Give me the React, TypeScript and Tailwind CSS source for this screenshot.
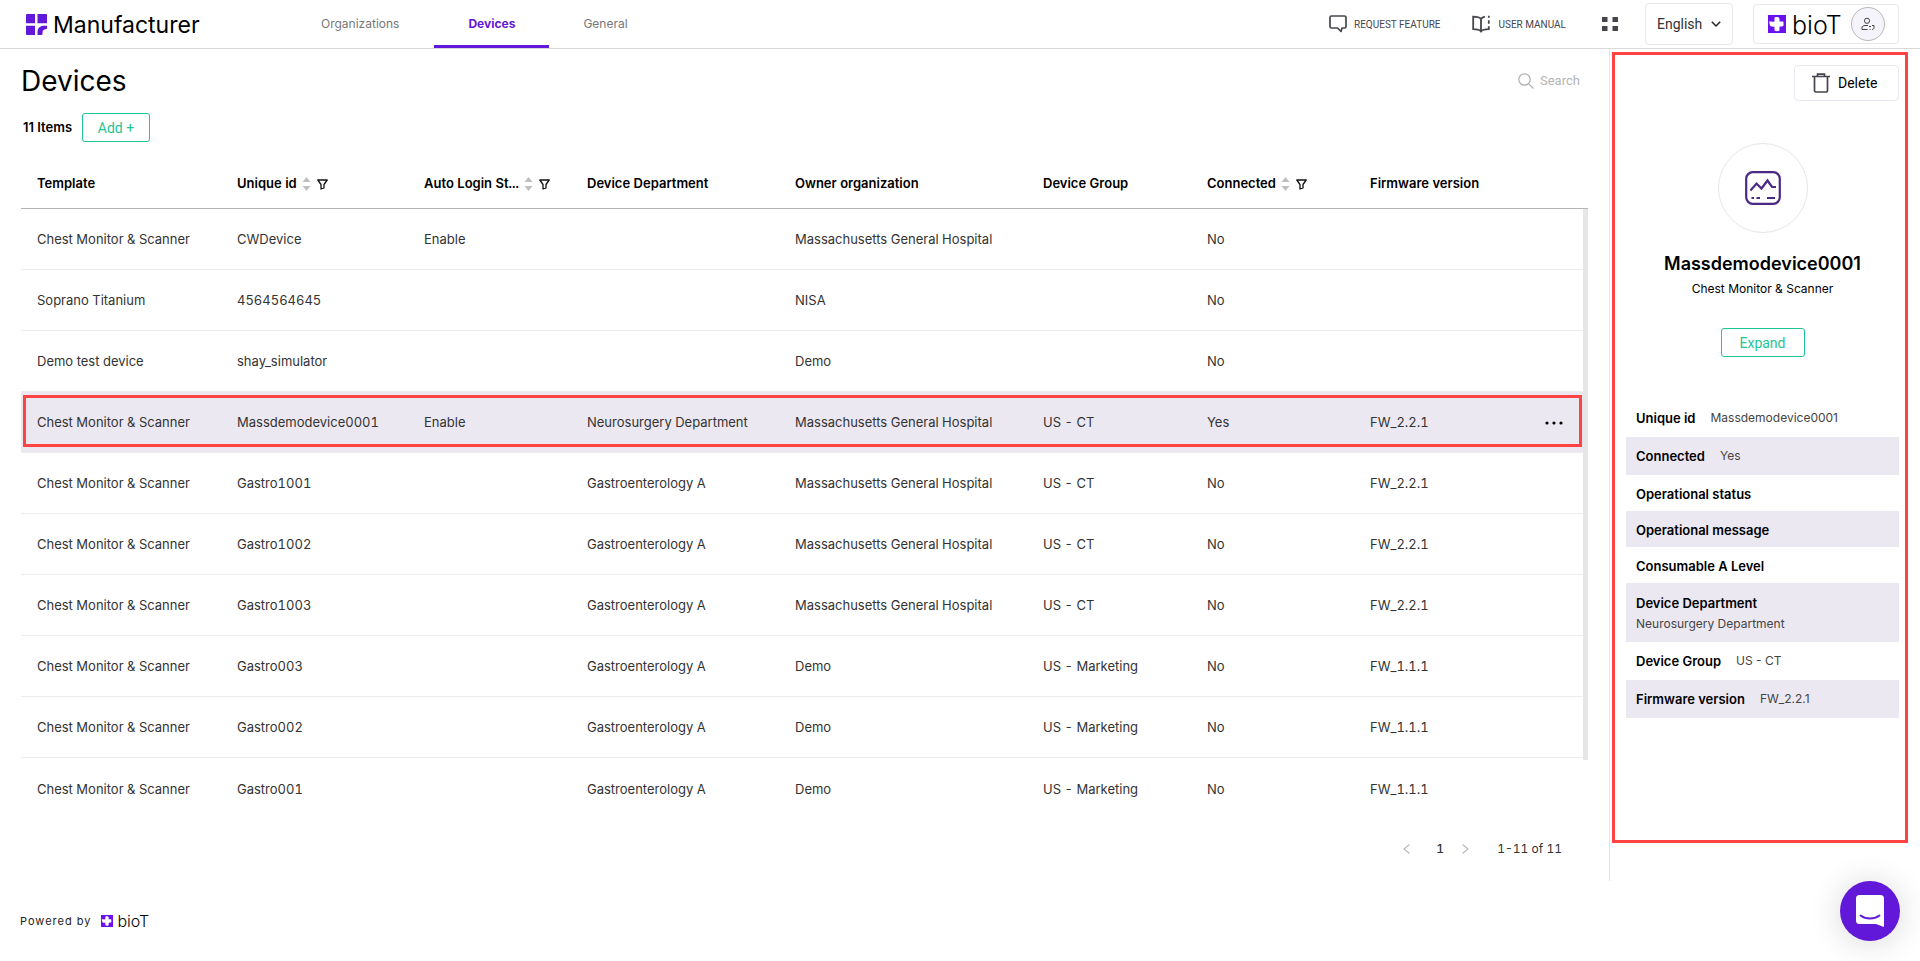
import React from "react";

type Device = {
  template: string;
  id: string;
  login?: string;
  department?: string;
  owner: string;
  group?: string;
  connected: string;
  firmware?: string;
};

const MGH = "Massachusetts General Hospital";

const devices: Device[] = [
  { template: "Chest Monitor & Scanner", id: "CWDevice", login: "Enable", owner: MGH, connected: "No" },
  { template: "Soprano Titanium", id: "4564564645", owner: "NISA", connected: "No" },
  { template: "Demo test device", id: "shay_simulator", owner: "Demo", connected: "No" },
  { template: "Chest Monitor & Scanner", id: "Massdemodevice0001", login: "Enable", department: "Neurosurgery Department", owner: MGH, group: "US - CT", connected: "Yes", firmware: "FW_2.2.1" },
  { template: "Chest Monitor & Scanner", id: "Gastro1001", department: "Gastroenterology A", owner: MGH, group: "US - CT", connected: "No", firmware: "FW_2.2.1" },
  { template: "Chest Monitor & Scanner", id: "Gastro1002", department: "Gastroenterology A", owner: MGH, group: "US - CT", connected: "No", firmware: "FW_2.2.1" },
  { template: "Chest Monitor & Scanner", id: "Gastro1003", department: "Gastroenterology A", owner: MGH, group: "US - CT", connected: "No", firmware: "FW_2.2.1" },
  { template: "Chest Monitor & Scanner", id: "Gastro003", department: "Gastroenterology A", owner: "Demo", group: "US - Marketing", connected: "No", firmware: "FW_1.1.1" },
  { template: "Chest Monitor & Scanner", id: "Gastro002", department: "Gastroenterology A", owner: "Demo", group: "US - Marketing", connected: "No", firmware: "FW_1.1.1" },
  { template: "Chest Monitor & Scanner", id: "Gastro001", department: "Gastroenterology A", owner: "Demo", group: "US - Marketing", connected: "No", firmware: "FW_1.1.1" },
];

const columns = [
  { label: "Template", width: "w-[200px]" },
  { label: "Unique id", width: "w-[187px]", filter: true },
  { label: "Auto Login St...", width: "w-[163px]", filter: true },
  { label: "Device Department", width: "w-[208px]" },
  { label: "Owner organization", width: "w-[248px]" },
  { label: "Device Group", width: "w-[164px]" },
  { label: "Connected", width: "w-[163px]", filter: true },
  { label: "Firmware version", width: "" },
];

const details = [
  { label: "Unique id", value: "Massdemodevice0001" },
  { label: "Connected", value: "Yes" },
  { label: "Operational status" },
  { label: "Operational message" },
  { label: "Consumable A Level" },
  { label: "Device Department", value: "Neurosurgery Department", stacked: true },
  { label: "Device Group", value: "US - CT" },
  { label: "Firmware version", value: "FW_2.2.1" },
];

function BiotMark({ className }: { className: string }) {
  return (
    <svg viewBox="0 0 18 18" className={className} aria-hidden="true">
      <path fill="#6a11f0" d="M0 0h18v18H0z" />
      <path fill="#fff" d="M6.500 2.500c2-1 5-.5 5 1.500v2.500c1.500 0 4-.5 4 .5v3.500c0 1-2.500 1-4 1V15c0 1.500-3 1.500-5 .5v-3.700C5 11.500 2.500 12 2 10.500L1 6.500c2 0 4 .5 5.500 0z" />
    </svg>
  );
}

function SortFilter() {
  return (
    <>
      <button type="button" aria-label="Sort" className="ml-[5px]">
        <svg width="9" height="14" viewBox="0 0 9 14" fill="#bfbfbf">
          <path d="M4.500 0 8.500 5H.5zM4.500 14l4-5H.5z" />
        </svg>
      </button>
      <button type="button" aria-label="Filter" className="ml-1.5">
        <svg width="11" height="11" viewBox="0 0 11 11" fill="none" stroke="#111" strokeWidth="1.300" strokeLinejoin="round">
          <path d="M.8 1h9.400L7 5.500V9L4 10V5.500z" />
        </svg>
      </button>
    </>
  );
}

function TopBar() {
  return (
    <header className="flex h-[49px] items-center justify-between border-b border-[#d9d9d9] pl-[26px] pr-[21px]">
      <div className="flex h-full items-center">
        <div className="flex w-[260px] items-center gap-1.5">
          <svg width="21" height="21" viewBox="0 0 21 21" fill="#6218d8" aria-hidden="true">
            <path d="M0 1a1 1 0 0 1 1-1h8v9.300H0zM11.500 0H20a1 1 0 0 1 1 1v8.300h-9.500zM0 11.700h9V21H1a1 1 0 0 1-1-1zM11.500 18c0-4 2.500-6.300 6.500-6.300h3V15c-3 0-4.500 1.500-4.500 3.500V20a1 1 0 0 1-1 1h-4z" />
          </svg>
          <span className="pt-0.5 text-[23px] leading-7 text-black">Manufacturer</span>
        </div>
        <nav className="flex h-full text-xs">
          <a href="#organizations" className="flex items-center px-[35px] text-[#777]">Organizations</a>
          <a href="#devices" className="flex items-center border-b-[3px] border-[#6218d8] px-[34px] pt-[3px] font-bold text-[#6218d8]">Devices</a>
          <a href="#general" className="flex items-center px-[34px] text-[#777]">General</a>
        </nav>
      </div>
      <div className="flex items-center font-['Roboto',sans-serif]">
        <a href="#request" className="flex items-center gap-[7px] text-[10px] text-[#45454d]">
          <svg width="18" height="18" viewBox="0 0 18 18" fill="none" stroke="#45454d" strokeWidth="1.700" strokeLinejoin="round">
            <path d="M2.500 1h13A1.500 1.500 0 0 1 17 2.500v9a1.500 1.500 0 0 1-1.500 1.500H13l-1 3.500L8.500 13h-6A1.500 1.500 0 0 1 1 11.500v-9A1.500 1.500 0 0 1 2.500 1z" />
          </svg>
          REQUEST FEATURE
        </a>
        <a href="#manual" className="ml-8 flex items-center gap-2 text-[10px] text-[#45454d]">
          <svg width="18" height="18" viewBox="0 0 18 18" fill="none" stroke="#45454d" strokeWidth="1.800">
            <path d="M9 4C7.500 2 5 1.700 1.200 1.700v12.500C5 14.200 7.500 14.500 9 16.500c1.500-2 4-2.300 7.800-2.300v-3M9 4v12M9 4c.8-1.300 2-2 4-2.300M16.800 .8v2M16.800 5.200v3.500" />
          </svg>
          USER MANUAL
        </a>
        <button type="button" aria-label="Apps" className="ml-9">
          <svg width="16" height="16" viewBox="0 0 16 16" fill="#45454d">
            <path d="M0 1h5.500v5H0zM10.500 1H16v5h-5.500zM0 10h5.500v5H0zM10.500 10H16v5h-5.500z" />
          </svg>
        </button>
        <div className="relative ml-[27px]">
          <select aria-label="Language" className="h-[42px] w-[88px] appearance-none rounded border border-[#e8e8ec] bg-white pl-[11px] text-sm text-[#333]">
            <option>English</option>
          </select>
          <svg className="pointer-events-none absolute right-3 top-4 h-2.5 w-2.5" viewBox="0 0 10 10" fill="none" stroke="#222" strokeWidth="1.500">
            <path d="m.8 2.800 4.200 4.200 4.200-4.200" />
          </svg>
        </div>
        <button type="button" className="ml-5 flex h-10 w-[146px] items-center rounded border border-[#e8e8ec] pl-3.5 font-['Inter',sans-serif]">
          <BiotMark className="h-[18px] w-[18px]" />
          <span className="ml-1.5 w-[59px] pt-0.5 text-left text-[25px] font-light leading-7 text-black">bioT</span>
          <span className="flex size-[34px] items-center justify-center rounded-full border border-[#b8b8bd] bg-[#f5f4fa]">
            <svg width="14" height="14" viewBox="0 0 14 14" fill="none" stroke="#444" strokeWidth="1">
              <circle cx="6" cy="3.800" r="2.600" />
              <path d="M6.500 12.500H1V11c0-2 1.500-2.500 3-2.500h3M8 9.500h2M8.500 12.500h1M11 8.500h2v2.200c0 1-.8 1.800-2 1.800" />
            </svg>
          </span>
        </button>
      </div>
    </header>
  );
}

function DeviceTable() {
  return (
    <div className="mt-3.5 flex">
      <table className="min-w-0 flex-1 table-fixed border-separate border-spacing-0 text-left text-[13px] tabular-nums">
        <thead>
          <tr>
            {columns.map((c) => (
              <th key={c.label} className={`${c.width} h-[53px] whitespace-nowrap border-b border-[#b5b5b5] pl-4 pt-1 font-semibold text-black`}>
                <div className="flex items-center">
                  {c.label}
                  {c.filter && <SortFilter />}
                </div>
              </th>
            ))}
            <th className="w-[54px] border-b border-[#b5b5b5]" aria-label="Actions" />
          </tr>
        </thead>
        <tbody className="text-[#333] *:*:h-[61px] *:*:border-b *:*:border-[#ededed] *:*:pl-4 *:*:pt-0.5 *:last:*:border-b-0">
          {devices.map((d) => {
            const selected = d.id === "Massdemodevice0001";
            return (
              <tr key={d.id} className={selected ? "relative bg-[#ece8f2]" : ""}>
                <td>{d.template}</td>
                <td>{d.id}</td>
                <td>{d.login}</td>
                <td>{d.department}</td>
                <td>{d.owner}</td>
                <td>{d.group}</td>
                <td>{d.connected}</td>
                <td>{d.firmware}</td>
                <td>
                  {selected && (
                    <>
                      <button type="button" aria-label="More" className="block">
                        <svg width="18" height="4" viewBox="0 0 18 4">
                          <circle cx="2" cy="2" r="1.600" />
                          <circle cx="9" cy="2" r="1.600" />
                          <circle cx="16" cy="2" r="1.600" />
                        </svg>
                      </button>
                      <div className="pointer-events-none absolute bottom-1.5 left-0.5 right-px top-[3px] border-[3px] border-[#ff4242]" />
                    </>
                  )}
                </td>
              </tr>
            );
          })}
        </tbody>
      </table>
      {/* scroll track, the header rule runs on above it */}
      <div className="flex w-[5px] flex-col pb-[59px]">
        <div className="h-[53px] border-b border-[#b5b5b5]" />
        <div className="flex-1 bg-[#e6e6e6]" />
      </div>
    </div>
  );
}

function DevicePanel() {
  return (
    <aside className="w-[311px] shrink-0 border-l border-[#e3e3e3] pb-[38px] pl-0.5 pr-3 pt-[3px]">
      <div className="flex h-full flex-col border-[3px] border-[#ff4242] pl-[11px] pr-1.5 pt-2.5">
        <button type="button" className="flex h-9 w-[105px] items-center gap-2 self-end rounded border border-[#e9e7f2] pl-[17px] font-['Roboto',sans-serif] text-sm text-black">
          <svg width="18" height="20" viewBox="0 0 18 20" fill="none" stroke="#45454d" strokeWidth="1.700">
            <path d="M0 3.500h18M5.500 3V1.200h7V3M2.500 3.500v14a1.500 1.500 0 0 0 1.500 1.500h10a1.500 1.500 0 0 0 1.500-1.500v-14" />
          </svg>
          Delete
        </button>
        <div className="flex flex-col items-center pt-[42px]">
          <div className="flex size-[90px] items-center justify-center rounded-full border border-[#e6e6e6]">
            <svg width="36" height="34" viewBox="0 0 36 34" fill="none" stroke="#4b2a85" strokeWidth="2.200">
              <rect x="1.200" y="1.200" width="33.600" height="31.600" rx="6.500" />
              <path d="m5.500 19.500 6-7 5 5 6-8 4.500 6.500h4M6.500 27H9M11.500 27H15M22 27h8" />
            </svg>
          </div>
          <h2 className="mt-[19px] text-lg font-semibold leading-6 text-black">Massdemodevice0001</h2>
          <p className="mt-[5px] text-xs text-black">Chest Monitor &amp; Scanner</p>
          <button type="button" className="mt-[31px] h-[29px] w-[84px] rounded-[3px] border border-[#1fc493] font-['Roboto',sans-serif] text-sm text-[#1fc493]">Expand</button>
        </div>
        <dl className="mt-[42px]">
          {details.map((d) => (
            <div
              key={d.label}
              className={
                d.stacked
                  ? "flex h-[59px] flex-col justify-center gap-1 px-2.5 even:bg-[#ece8f2]"
                  : d.value
                    ? "flex h-[38px] items-center gap-[15px] px-2.5 even:bg-[#ece8f2]"
                    : "flex h-9 items-center px-2.5 pt-0.5 even:bg-[#ece8f2]"
              }
            >
              <dt className="text-[13px] font-semibold leading-[18px] text-black">{d.label}</dt>
              {d.value && <dd className="text-xs text-[#444]">{d.value}</dd>}
            </div>
          ))}
        </dl>
      </div>
    </aside>
  );
}

export default function App() {
  return (
    <div className="min-h-screen bg-white font-['Inter',sans-serif]">
      <TopBar />
      <div className="flex min-h-[832px]">
        <main className="min-w-0 flex-1 px-[21px] pt-4">
          <div className="flex items-center justify-between">
            <h1 className="text-[28px] leading-8 text-black">Devices</h1>
            <label className="flex items-center gap-1.5">
              <svg width="16" height="16" viewBox="0 0 16 16" fill="none" stroke="#b0b0b0" strokeWidth="1.200">
                <circle cx="6.500" cy="6.500" r="5.700" />
                <path d="m10.800 10.800 4.700 4.700" />
              </svg>
              <input type="text" placeholder="Search" aria-label="Search" className="w-12 font-['Roboto',sans-serif] text-[13px] leading-4 outline-none placeholder:text-[#b5b5b5]" />
            </label>
          </div>
          <div className="mt-4 flex h-[29px] items-center">
            <span className="ml-0.5 w-[51px] whitespace-nowrap text-[13px] font-semibold text-black">11 Items</span>
            <button type="button" className="ml-2 h-[29px] w-[68px] rounded-[3px] border border-[#1fc493] font-['Roboto',sans-serif] text-sm text-[#1fc493]">Add +</button>
          </div>
          <DeviceTable />
          <div className="mr-[26px] mt-5 flex items-center justify-end text-xs leading-5 tabular-nums text-[#333]">
            <button type="button" aria-label="Previous page">
              <svg width="7" height="10" viewBox="0 0 7 10" fill="none" stroke="#bbb" strokeWidth="1.200"><path d="M6.500.5 1 5l5.500 4.500" /></svg>
            </button>
            <span className="w-[52px] pl-2 text-center font-medium">1</span>
            <button type="button" aria-label="Next page">
              <svg width="7" height="10" viewBox="0 0 7 10" fill="none" stroke="#bbb" strokeWidth="1.200"><path d="M.5.5 6 5 .5 9.500" /></svg>
            </button>
            <span className="ml-7">1-11 of 11</span>
          </div>
        </main>
        <DevicePanel />
      </div>
      <footer className="flex items-center pl-5 pt-[31px] text-[11px] text-[#222]">
        <span className="tracking-[1px]">Powered by</span>
        <BiotMark className="ml-2.5 h-3 w-3" />
        <span className="ml-1 text-base font-light leading-[18px] text-black">bioT</span>
      </footer>
      <button type="button" aria-label="Open chat" className="fixed bottom-5 right-5 flex size-[60px] items-center justify-center rounded-full bg-[#6218d8] shadow-[0_2px_32px_rgba(0,0,0,0.16)]">
        <svg width="28" height="32" viewBox="0 0 28 32">
          <path fill="#fff" d="M3.500 0h21A3.500 3.500 0 0 1 28 3.500V32l-8-3H3.500A3.500 3.500 0 0 1 0 25.500v-22A3.500 3.500 0 0 1 3.500 0z" />
          <path d="M4.500 20.500c5.500 4 13.500 4 19 0" fill="none" stroke="#6218d8" strokeWidth="1.800" strokeLinecap="round" />
        </svg>
      </button>
    </div>
  );
}
